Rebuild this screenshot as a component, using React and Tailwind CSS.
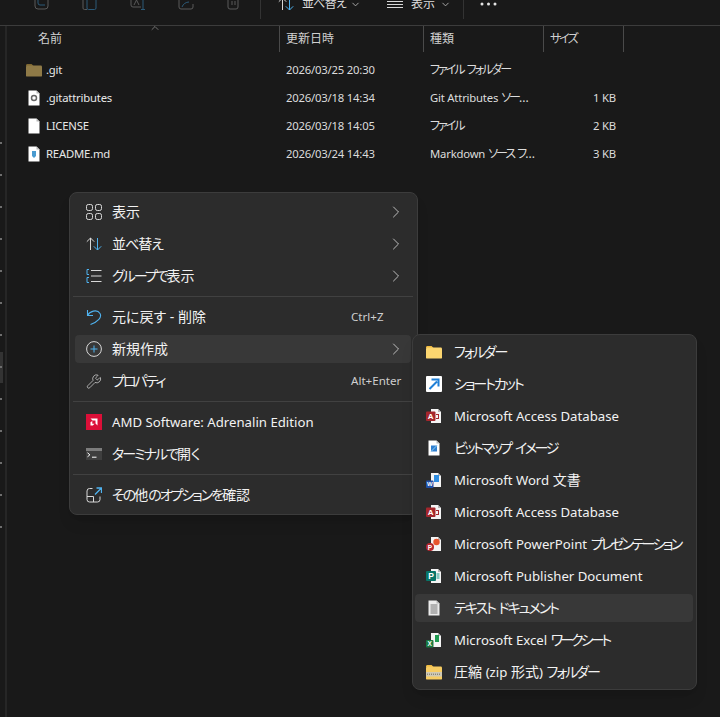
import React from "react";
import { ChevronRight, ChevronDown, ChevronUp, Wrench } from "lucide-react";

const GRAY = "#d8d8d8";
const BLUE = "#4fb3f0";

// latin runs are a bit smaller than the japanese ones, kana is squeezed
const L = ({ children }) => <span className="text-[13.2px]">{children}</span>;
const R = ({ children }) => <span className="text-[11.3px] tracking-[-0.2px]">{children}</span>;
const K = ({ children }) => <span className="tracking-[-2px] [word-spacing:2px]">{children}</span>;

function FolderIcon({ dim }) {
  return (
    <svg width="16" height="16" viewBox="0 0 16 16">
      <path d="M0 3.5C0 2.7.6 2 1.4 2h4.2L7.5 4H0z" fill={dim ? "#7d6630" : "#eeb93f"} />
      <rect y="3.6" width="16" height="11" rx="1.2" fill={dim ? "#8f7a47" : "#fcd670"} />
    </svg>
  );
}

function ZipIcon() {
  return (
    <svg width="16" height="16" viewBox="0 0 16 16">
      <path d="M0 2.5C0 1.7.6 1 1.4 1h4.2L7.5 3H0z" fill="#eeb93f" />
      <rect y="2.6" width="16" height="13" rx="1.2" fill="#f7cc62" />
      <rect y="8" width="16" height="4.5" fill="#cfc9b4" />
      <path d="M1 10.2h14" stroke="#6d6a5e" strokeDasharray="1 1" />
    </svg>
  );
}

function PageIcon({ children, fill = "#fff" }) {
  return (
    <svg width="16" height="16" viewBox="0 0 16 16">
      <path d="M2.5 .5h8l3 3v12h-11z" fill={fill} />
      <path d="M10.5 .5v3h3z" fill="#b8b8b8" />
      {children}
    </svg>
  );
}

function OfficePage({ children }) {
  return (
    <svg width="16" height="16" viewBox="0 0 16 16">
      <path d="M5 1h7l3 3v11H5z" fill="#f4f4f4" />
      <path d="M12 1v3h3z" fill="#b5b5b5" />
      {children}
    </svg>
  );
}

const badge = (x, y, size, color, letter, fontSize) => (
  <>
    <rect x={x} y={y} width={size} height={size} rx="1" fill={color} />
    <text x={x + size / 2} y={y + size * 0.78} textAnchor="middle" fontSize={fontSize} fontWeight="700" fill="#fff" fontFamily="Liberation Sans">{letter}</text>
  </>
);

const AccessIcon = (
  <OfficePage>
    <path d="M10 6h3v5h-3v-1h2V7h-2z" fill="#a4262c" />
    {badge(0, 3.5, 9.5, "#a4262c", "A", 8)}
  </OfficePage>
);
const WordIcon = (
  <OfficePage>
    <rect x="8" y="3" width="5" height="7" fill="#2f8de0" />
    {badge(0, 8.5, 7.5, "#1f4fa8", "W", 6)}
  </OfficePage>
);
const PptIcon = (
  <OfficePage>
    <circle cx="10.5" cy="6" r="3.2" fill="#e8552d" />
    <circle cx="4" cy="11" r="4" fill="#b7282e" />
    <text x="4" y="13.5" textAnchor="middle" fontSize="6.5" fontWeight="700" fill="#fff" fontFamily="Liberation Sans">P</text>
  </OfficePage>
);
const PublisherIcon = (
  <OfficePage>
    <path d="M10.5 6h3M10.5 8h3M10.5 10h3" stroke="#1a9a8a" />
    {badge(0, 3, 10, "#077568", "P", 8.5)}
  </OfficePage>
);
const ExcelIcon = (
  <OfficePage>
    <path d="M9 3h4v7H9z" fill="#1e9a50" />
    {badge(0, 8, 7.5, "#1a7a42", "X", 6.5)}
  </OfficePage>
);

function Row({ icon, name, date, type, size }) {
  return (
    <div className="flex h-7 items-center text-[12px] text-[#dcdcdc]">
      <div className="flex w-[279px] items-center pl-[19px]">
        <span className="flex w-4 justify-center">{icon}</span>
        <span className="ml-1 text-[#e8e8e8]"><R>{name}</R></span>
      </div>
      <div className="w-[144px]"><R>{date}</R></div>
      <div className="w-[114px] whitespace-nowrap">{type}</div>
      <div className="w-[72px] text-right"><R>{size}</R></div>
    </div>
  );
}

function MenuRow({ icon, label, shortcut, arrow, active, jp }) {
  return (
    <div className="flex h-8 items-center py-[2px]">
      <div className={`flex h-7 w-full items-center rounded-[4px] pl-[11px] text-[14px] text-[#f2f2f2] ${active ? "bg-[#383838]" : ""}`}>
        <span className="flex w-4 justify-center">{icon}</span>
        <span className={`ml-[10px] flex-1 whitespace-nowrap ${jp ? "pb-[2px]" : ""}`}>{label}</span>
        <span className="flex w-[60px] justify-end">
          {shortcut && <span className="w-full text-[11.6px] text-[#cfcfcf]">{shortcut}</span>}
          {arrow && <ChevronRight size={20} strokeWidth={1} className="mr-[5px] text-[#d8d8d8]" />}
        </span>
      </div>
    </div>
  );
}

function SubRow({ icon, label, active, jp }) {
  return (
    <div className="flex h-8 items-center py-[2px]">
      <div className={`flex h-7 w-full items-center rounded-[4px] pl-[11px] text-[14px] text-[#f2f2f2] ${active ? "bg-[#383838]" : ""}`}>
        <span className="flex w-4 justify-center">{icon}</span>
        <span className={`ml-3 whitespace-nowrap ${jp ? "pb-[2px]" : ""}`}>{label}</span>
      </div>
    </div>
  );
}

const Sep = () => <div className="-mx-[2px] my-1 h-px bg-[#414141]" />;

const Grid = (
  <svg width="16" height="16" viewBox="0 0 16 16" fill="none" stroke={GRAY} strokeWidth="1">
    <rect x=".5" y=".5" width="6" height="6" rx="1.8" /><rect x="9.5" y=".5" width="6" height="6" rx="1.8" />
    <rect x=".5" y="9.5" width="6" height="6" rx="1.8" /><rect x="9.5" y="9.5" width="6" height="6" rx="1.8" />
  </svg>
);
const Sort = (
  <svg width="16" height="16" viewBox="0 0 16 16" fill="none" strokeWidth="1">
    <path d="M4.5 14V2M.8 5.7 4.5 2l3.7 3.7" stroke={GRAY} />
    <path d="M11.5 2v12M7.8 10.3l3.7 3.7 3.7-3.7" stroke={BLUE} />
  </svg>
);
const Group = (
  <svg width="16" height="16" viewBox="0 0 16 16" fill="none" strokeWidth="1">
    <path d="M3 1.5H1v5h2M3 9.5H1v5h2" stroke={BLUE} />
    <path d="M5 2.5h10.5M5 8h10.5M5 13.5h10.5" stroke={GRAY} />
  </svg>
);
const Undo = (
  <svg width="16" height="16" viewBox="0 0 16 16" fill="none" stroke={BLUE} strokeWidth="1.1">
    <path d="M1.5 1v5.5H7" />
    <path d="M1.5 6.5C3.5 2.5 11-.5 14 4.5c2.2 3.8-2 8-9.5 11" />
  </svg>
);
const Plus = (
  <svg width="16" height="16" viewBox="0 0 16 16" fill="none" strokeWidth="1">
    <circle cx="8" cy="8" r="7.4" stroke={GRAY} />
    <path d="M8 4.5v7M4.5 8h7" stroke={BLUE} />
  </svg>
);
const Amd = (
  <svg width="16" height="16" viewBox="0 0 16 16">
    <rect width="16" height="16" fill="#dc0f38" />
    <path d="M4.5 4.5h7v7l-2-2v-3h-3zM4.5 11.5V8.2L6.3 7v2.7h2.2l-1.7 1.8z" fill="#fff" />
  </svg>
);
const Terminal = (
  <svg width="16" height="16" viewBox="0 0 16 16" fill="none">
    <rect y="2" width="16" height="12" fill="#3f3f3f" />
    <rect y="2" width="16" height="3" fill="#7c7c7c" />
    <path d="m1.5 6.8 2.4 2-2.4 2" stroke="#fff" />
    <path d="M6 11.2h4.5" stroke="#fff" />
  </svg>
);
const More = (
  <svg width="16" height="16" viewBox="0 0 16 16" fill="none" strokeWidth="1">
    <path d="M6.5 1.5h-3a2.5 2.5 0 0 0-2.5 2.5v8.5A2.5 2.5 0 0 0 3.5 15h8a2.5 2.5 0 0 0 2.5-2.5V9.5" stroke={GRAY} />
    <path d="M1 9.5h6.5V15" stroke={GRAY} />
    <path d="m9 7.5 6-6M10.5 1h5v5" stroke={BLUE} strokeWidth="1.3" />
  </svg>
);

// only the lower part of the toolbar icons is on screen
const ToolIcon = ({ children }) => (
  <svg width="16" height="10" viewBox="0 0 16 10" fill="none" stroke="#5a5a5a" strokeWidth="1">{children}</svg>
);

export default function App() {
  return (
    <div className="relative h-[717px] w-[720px] overflow-hidden bg-[#191919] font-['Noto_Sans','Noto_Sans_CJK_JP',sans-serif] [font-feature-settings:'palt']">
      <div className="flex h-[26px] items-start overflow-hidden border-b border-[#3c3c3c] text-[12px] text-[#dcdcdc]">
        <div className="flex w-[260px] gap-8 pl-[34px]">
          <ToolIcon><path d="M1 0v6a3 3 0 0 0 3 3h7a3 3 0 0 0 3-3V0" /><path d="M4 0v3a2 2 0 0 0 2 2h5" stroke="#2c5a78" /></ToolIcon>
          <ToolIcon><path d="M1 0v8a1.5 1.5 0 0 0 1.5 1.5H5" /><path d="M5 0v8a1.5 1.5 0 0 0 1.5 1.5h6A1.5 1.5 0 0 0 14 8V0" stroke="#2c5a78" /></ToolIcon>
          <ToolIcon><path d="M1 0v5a2 2 0 0 0 2 2h8" /><path d="M4 5l2.5-5L9 5" /><path d="M13 0v10M11 9.5h4" stroke="#2c5a78" /></ToolIcon>
          <ToolIcon><path d="M1 0v7a2 2 0 0 0 2 2h10a2 2 0 0 0 2-2V4" /><path d="M4 7c1-3 4-5 7-5" stroke="#2c5a78" /></ToolIcon>
          <ToolIcon><path d="M2 0v7a2 2 0 0 0 2 2h6a2 2 0 0 0 2-2V0M6 1v4M9 1v4" /></ToolIcon>
        </div>
        <div className="flex h-[19px] w-[203px] items-start border-l border-[#333333]">
          <div className="-mt-[4px] flex h-4 items-center pl-[17px]">
            <svg width="16" height="16" viewBox="0 0 16 16" fill="none" strokeWidth="1">
              <path d="M4.5 14V2M.8 5.7 4.5 2l3.7 3.7" stroke={GRAY} />
              <path d="M11.5 2v12M7.8 10.3l3.7 3.7 3.7-3.7" stroke={BLUE} />
            </svg>
            <span className="ml-2 w-[43px] whitespace-nowrap tracking-[-0.8px]">並べ替え</span>
            <ChevronDown size={11} className="ml-[5px] text-[#b0b0b0]" />
            <svg className="ml-[26px]" width="16" height="16" viewBox="0 0 16 16" stroke="#d8d8d8" strokeWidth="1">
              <path d="M0 5.5h16M0 8.5h16M0 11.5h16" />
            </svg>
            <span className="ml-2 w-6 whitespace-nowrap">表示</span>
            <ChevronDown size={11} className="ml-[5px] text-[#b0b0b0]" />
          </div>
        </div>
        <div className="flex h-[19px] items-start border-l border-[#333333] pl-4">
          <svg width="18" height="10" viewBox="0 0 18 10" fill="#e4e4e4">
            <circle cx="2" cy="4" r="1.5" /><circle cx="8.5" cy="4" r="1.5" /><circle cx="15" cy="4" r="1.5" />
          </svg>
        </div>
      </div>

      <div className="flex h-[691px]">
        <div className="flex h-full w-[7px] flex-col border-r-2 border-[#262626]">
          <div className="relative flex flex-col gap-[30px] pt-[116px]">
            <div className="absolute left-0 top-[326px] h-[31px] w-[3px] bg-[#333333]" />
            {Array.from({ length: 13 }).map((_, i) => (
              <div key={i} className="relative h-[2px] w-[2px] bg-[#6e6e6e]" />
            ))}
          </div>
        </div>
        <div>
          <div className="flex h-[26px] text-[12px] text-[#d0d0d0]">
            <div className="relative flex w-[273px] items-center border-r border-[#4a4a4a] pl-[31px]">
              名前
              <ChevronUp size={12} strokeWidth={1.2} className="absolute left-[142px] top-[-4px] text-[#b0b0b0]" />
            </div>
            <div className="flex w-[144px] items-center border-r border-[#4a4a4a] pl-[6px]">更新日時</div>
            <div className="flex w-[120px] items-center border-r border-[#4a4a4a] pl-[6px]">種類</div>
            <div className="flex w-[80px] items-center border-r border-[#4a4a4a] pl-[6px]"><K>サイズ</K></div>
          </div>
          <div className="pt-1">
            <Row icon={<FolderIcon dim />} name=".git" date="2026/03/25 20:30" type={<K>ファイル フォルダー</K>} />
            <Row icon={<PageIcon><circle cx="8" cy="8" r="2.5" fill="none" stroke="#666" strokeWidth="1.5" /></PageIcon>} name=".gitattributes" date="2026/03/18 14:34" type={<><R>Git Attributes</R> <K>ソー</K>...</>} size="1 KB" />
            <Row icon={<PageIcon />} name="LICENSE" date="2026/03/18 14:05" type={<K>ファイル</K>} size="2 KB" />
            <Row icon={<PageIcon><path d="M6 5h4v5l-2 2-2-2z" fill="#4a9bd0" /></PageIcon>} name="README.md" date="2026/03/24 14:43" type={<><R>Markdown</R> <K>ソース フ</K>...</>} size="3 KB" />
          </div>
        </div>
      </div>

      <div className="absolute left-[69px] top-[192px] w-[349px] rounded-lg border border-[#3c3c3c] bg-[#2c2c2c] py-[3px] pl-[5px] pr-[6px] shadow-lg">
        <MenuRow jp icon={Grid} label="表示" arrow />
        <MenuRow jp icon={Sort} label={<span className="tracking-[-1px]">並べ替え</span>} arrow />
        <MenuRow jp icon={Group} label={<><K>グループで</K>表示</>} arrow />
        <Sep />
        <MenuRow jp icon={Undo} label="元に戻す - 削除" shortcut="Ctrl+Z" />
        <MenuRow jp icon={Plus} label="新規作成" arrow active />
        <MenuRow jp icon={<Wrench size={17} strokeWidth={1.1} className="text-[#d8d8d8]" />} label={<K>プロパティ</K>} shortcut="Alt+Enter" />
        <Sep />
        <MenuRow icon={Amd} label={<L>AMD Software: Adrenalin Edition</L>} />
        <MenuRow jp icon={Terminal} label={<><K>ターミナルで</K>開く</>} />
        <Sep />
        <MenuRow jp icon={More} label={<><K>その</K>他<K>のオプションを</K>確認</>} />
      </div>

      <div className="absolute left-[412px] top-[334px] w-[285px] rounded-lg border border-[#3c3c3c] bg-[#2c2c2c] py-px pl-[2px] pr-[3px] shadow-lg">
        <SubRow jp icon={<FolderIcon />} label={<K>フォルダー</K>} />
        <SubRow jp icon={<svg width="16" height="16" viewBox="0 0 16 16"><rect width="16" height="16" rx="1" fill="#fff" /><path d="M3.5 13 11 5.5M5.5 3.5h7v7" stroke="#1f7fd6" strokeWidth="2" fill="none" /></svg>} label={<K>ショートカット</K>} />
        <SubRow icon={AccessIcon} label={<L>Microsoft Access Database</L>} />
        <SubRow jp icon={<PageIcon><path d="M5 5.5h6v6H5z" fill="#2f7fd0" /><path d="m5 11.5 6-6" stroke="#8fd0f5" /></PageIcon>} label={<span className="tracking-[-2.4px] [word-spacing:3px]">ビットマップ イメージ</span>} />
        <SubRow icon={WordIcon} label={<><L>Microsoft Word</L> 文書</>} />
        <SubRow icon={AccessIcon} label={<L>Microsoft Access Database</L>} />
        <SubRow icon={PptIcon} label={<><L>Microsoft PowerPoint</L> <span className="tracking-[-2.6px]">プレゼンテーション</span></>} />
        <SubRow icon={PublisherIcon} label={<L>Microsoft Publisher Document</L>} />
        <SubRow jp active icon={<PageIcon fill="#ececec"><path d="M4.5 5h7M4.5 7h7M4.5 9h7M4.5 11h7M4.5 13h7" stroke="#777" /></PageIcon>} label={<K>テキスト ドキュメント</K>} />
        <SubRow icon={ExcelIcon} label={<><L>Microsoft Excel</L> <span className="tracking-[-3px]">ワークシート</span></>} />
        <SubRow icon={<ZipIcon />} label={<>圧縮 <L>(zip</L> 形式<L>)</L> <K>フォルダー</K></>} />
      </div>
    </div>
  );
}
